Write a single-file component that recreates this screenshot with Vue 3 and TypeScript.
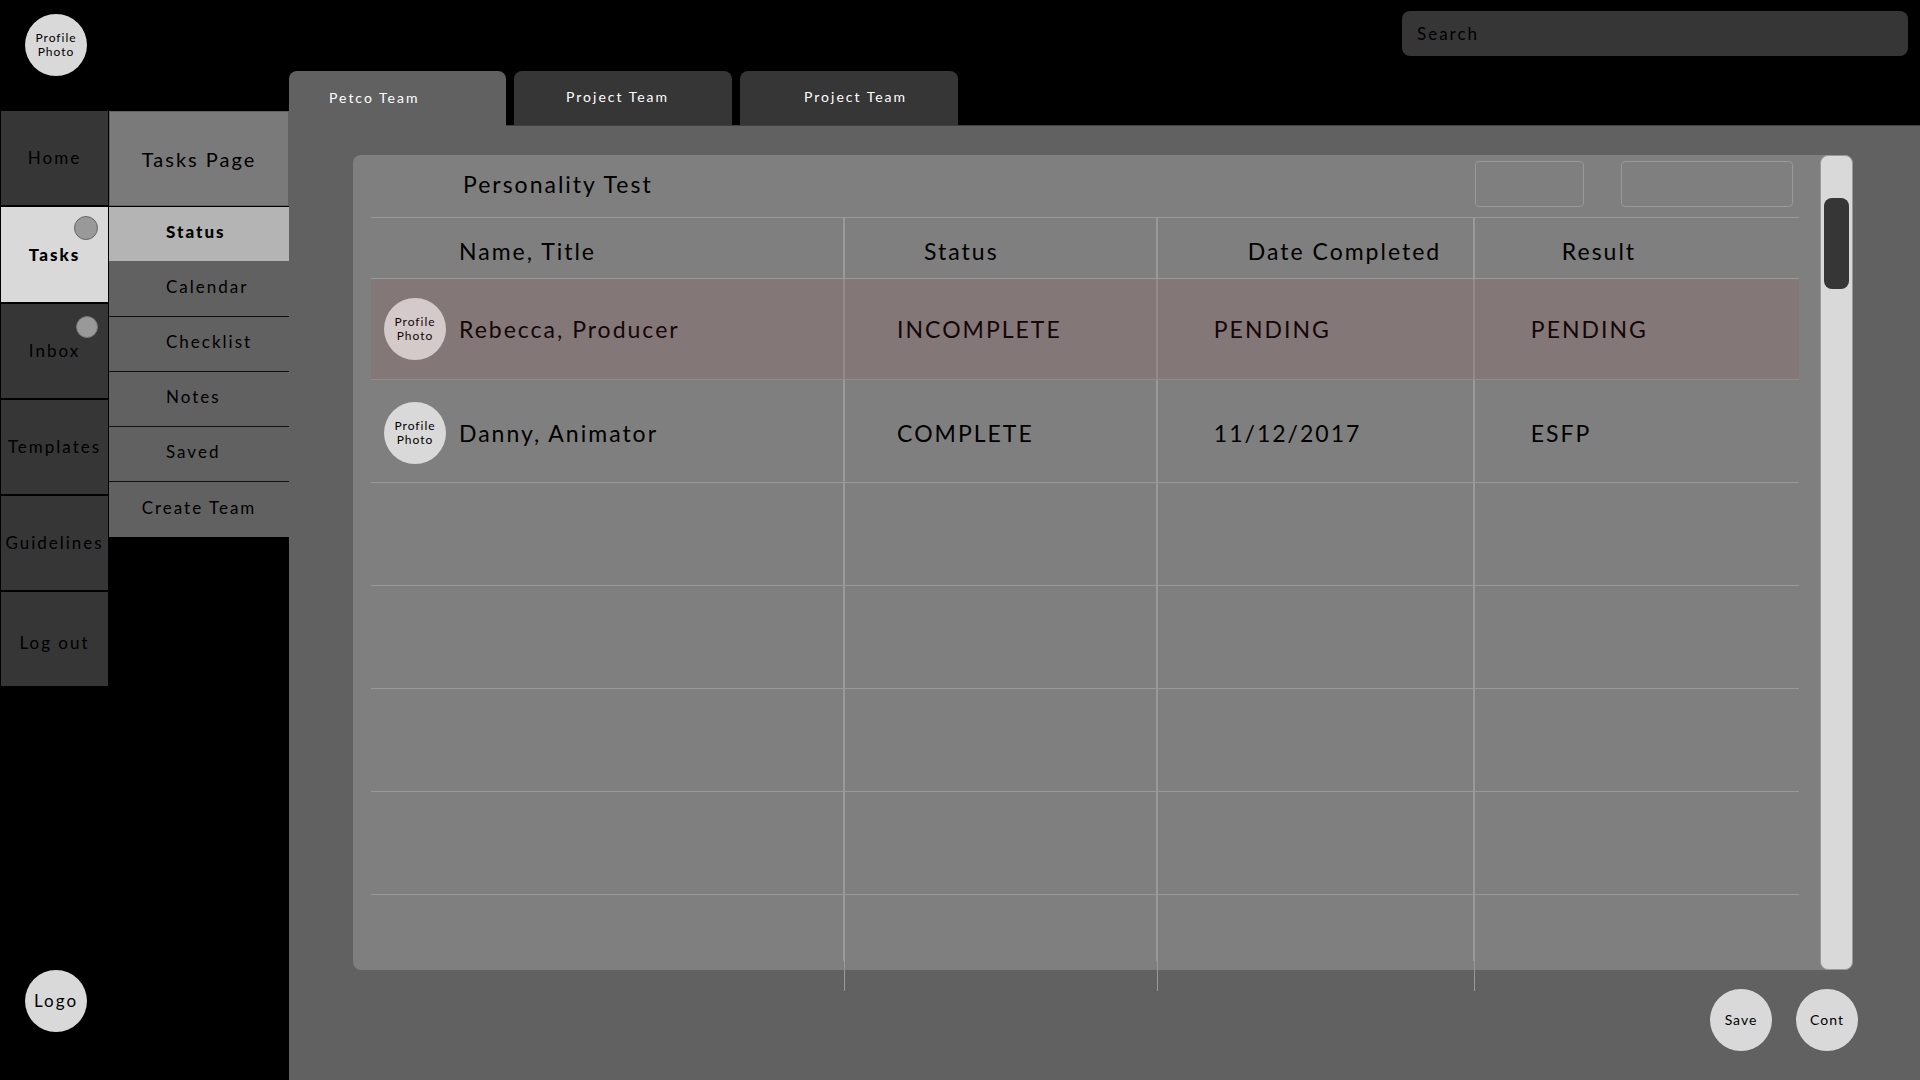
<script setup lang="ts">
import { ref } from 'vue'

interface NavItem {
  label: string
  badge?: 'outlined' | 'soft'
}

interface Person {
  name: string
  status: string
  date: string
  result: string
  pending: boolean
}

const navItems: NavItem[] = [
  { label: 'Home' },
  { label: 'Tasks', badge: 'outlined' },
  { label: 'Inbox', badge: 'soft' },
  { label: 'Templates' },
  { label: 'Guidelines' },
  { label: 'Log out' },
]
const activeNav = ref('Tasks')

const pages: string[] = ['Status', 'Calendar', 'Checklist', 'Notes', 'Saved']
const activePage = ref('Status')

const tabs: string[] = ['Petco Team', 'Project Team', 'Project Team']
const activeTab = ref(0)

// Each tab's label sits one step further in than the one before it
const tabInset = (index: number): string => `${40 + index * 12}px`

const people: Person[] = [
  { name: 'Rebecca, Producer', status: 'INCOMPLETE', date: 'PENDING', result: 'PENDING', pending: true },
  { name: 'Danny, Animator', status: 'COMPLETE', date: '11/12/2017', result: 'ESFP', pending: false },
]
const emptyRows = 5
const query = ref('')
</script>

<template>
  <div class="app">
    <aside class="side">
      <div class="profile">
        <button type="button" class="circle photo">Profile<br />Photo</button>
      </div>
      <div class="menus">
        <nav class="rail" aria-label="Main">
          <a
            v-for="item in navItems"
            :key="item.label"
            href="#"
            class="rail-item"
            :class="{ active: item.label === activeNav }"
            @click.prevent="activeNav = item.label"
          >
            {{ item.label }}
            <span v-if="item.badge" class="badge" :class="item.badge"></span>
          </a>
        </nav>
        <nav class="sub" aria-label="Tasks">
          <h1 class="sub-title">Tasks Page</h1>
          <a
            v-for="page in pages"
            :key="page"
            href="#"
            class="sub-item"
            :class="{ active: page === activePage }"
            @click.prevent="activePage = page"
          >{{ page }}</a>
          <a href="#" class="sub-item create">Create Team</a>
        </nav>
      </div>
      <a href="#" class="circle logo">Logo</a>
    </aside>

    <div class="content">
      <header class="top">
        <input v-model="query" class="search" type="search" placeholder="Search" aria-label="Search" />
      </header>
      <div class="tabs" role="tablist">
        <button
          v-for="(tab, i) in tabs"
          :key="i"
          type="button"
          role="tab"
          class="tab"
          :class="{ active: i === activeTab }"
          :style="{ paddingLeft: tabInset(i) }"
          :aria-selected="i === activeTab"
          @click="activeTab = i"
        >{{ tab }}</button>
      </div>

      <main class="main">
        <section class="panel">
          <div class="sheet">
            <div class="sheet-head">
              <h2 class="title">Personality Test</h2>
              <button type="button" class="box small" aria-label="Filter"></button>
              <button type="button" class="box large" aria-label="Sort"></button>
            </div>
            <table class="table">
              <colgroup>
                <col class="c-name" />
                <col class="c-status" />
                <col class="c-date" />
                <col />
              </colgroup>
              <thead>
                <tr>
                  <th scope="col" class="h-name">Name, Title</th>
                  <th scope="col" class="h-status">Status</th>
                  <th scope="col" class="h-date">Date Completed</th>
                  <th scope="col" class="h-result">Result</th>
                </tr>
              </thead>
              <tbody>
                <tr v-for="person in people" :key="person.name" :class="{ pending: person.pending }">
                  <td class="who">
                    <div class="person">
                      <span class="circle photo">Profile<br />Photo</span>
                      <span>{{ person.name }}</span>
                    </div>
                  </td>
                  <td>{{ person.status }}</td>
                  <td>{{ person.date }}</td>
                  <td>{{ person.result }}</td>
                </tr>
                <tr v-for="n in emptyRows" :key="n" :class="{ last: n === emptyRows }">
                  <td></td>
                  <td></td>
                  <td></td>
                  <td></td>
                </tr>
              </tbody>
            </table>
          </div>
          <div class="track" role="scrollbar" aria-orientation="vertical" aria-valuenow="5" aria-label="Scroll">
            <div class="thumb"></div>
          </div>
        </section>
        <footer class="actions">
          <button type="button" class="circle">Save</button>
          <button type="button" class="circle">Cont</button>
        </footer>
      </main>
    </div>
  </div>
</template>

<style>
body {
  margin: 0;
  background: #000;
}
</style>

<style scoped>
.app,
.app * {
  box-sizing: border-box;
}

.app {
  display: flex;
  min-height: 100vh;
  background: #000;
  color: #000;
  font-family: Lato, 'Noto Sans', sans-serif;
  font-size: 17px;
  line-height: 24px;
  letter-spacing: 2px;
}

a {
  color: inherit;
  text-decoration: none;
}

button,
input {
  font: inherit;
  letter-spacing: inherit;
  color: inherit;
  border: 0;
  padding: 0;
  margin: 0;
}

.circle {
  display: flex;
  flex: none;
  align-items: center;
  justify-content: center;
  width: 62px;
  height: 62px;
  border-radius: 50%;
  background: #d9d9d9;
  text-align: center;
}

.photo {
  font-size: 12px;
  line-height: 14px;
  letter-spacing: 1px;
}

/* Left column */
.side {
  display: flex;
  flex: none;
  flex-direction: column;
  width: 289px;
}

.profile {
  height: 111px;
  padding: 14px 25px;
}

.menus {
  display: flex;
  gap: 1px;
  padding-left: 1px;
}

.rail {
  display: flex;
  flex-direction: column;
  gap: 2px;
  width: 107px;
}

.rail-item {
  position: relative;
  display: flex;
  align-items: center;
  justify-content: center;
  height: 94px;
  background: #363636;
}

.rail-item:last-child {
  padding-top: 8px;
}

.rail-item.active {
  height: 95px;
  background: #d9d9d9;
  font-weight: 900;
}

.badge {
  position: absolute;
  top: 9px;
  right: 10px;
  width: 24px;
  height: 24px;
  border: 1px solid #666;
  border-radius: 50%;
  background: #999;
}

.badge.soft {
  top: 12px;
  width: 22px;
  height: 22px;
  border-color: #777;
}

.sub {
  flex: 1;
}

.sub-title {
  display: flex;
  align-items: center;
  justify-content: center;
  height: 95px;
  margin: 0 0 1px;
  border: 1px solid #616161;
  background: #7a7a7a;
  font-size: 20px;
  font-weight: 400;
}

.sub-item {
  display: flex;
  align-items: center;
  height: 55px;
  padding: 0 0 4px 57px;
  border-bottom: 1px solid #111;
  background: #616161;
}

.sub-item.active {
  border-bottom-color: #616161;
  background: #b4b4b4;
  font-weight: 900;
}

.sub-item.create {
  justify-content: center;
  padding-left: 0;
  border-bottom: 0;
}

.logo {
  margin: auto 0 48px 25px;
}

/* Header */
.content {
  display: flex;
  flex: 1;
  flex-direction: column;
  min-width: 0;
}

.top {
  display: flex;
  justify-content: flex-end;
  height: 71px;
  padding: 11px 12px 0;
}

.search {
  width: 506px;
  height: 45px;
  padding: 0 15px;
  border-radius: 8px;
  background: #363636;
  appearance: none;
  outline: none;
}

.search::placeholder {
  color: #000;
  opacity: 1;
}

.tabs {
  display: flex;
  gap: 8px;
}

.tab {
  width: 218px;
  height: 54px;
  padding-bottom: 2px;
  border-radius: 8px 8px 0 0;
  background: #363636;
  color: #fff;
  font-size: 14px;
  text-align: left;
}

.tab.active {
  width: 217px;
  height: 55px;
  margin-bottom: -1px;
  background: #616161;
  z-index: 1;
}

/* Work area */
.main {
  display: flex;
  flex: 1;
  flex-direction: column;
  padding: 29px 62px 29px 64px;
  border-top: 1px solid #404040;
  background: #616161;
}

.panel {
  display: flex;
  flex: 1;
  gap: 21px;
  margin: 0 5px 19px 0;
  padding-left: 18px;
  border-radius: 8px;
  background: #7f7f7f;
}

.sheet {
  flex: 1;
  min-width: 0;
}

.sheet-head {
  display: flex;
  align-items: center;
  height: 62px;
  padding: 0 6px 4px 92px;
}

.title {
  flex: 1;
  margin: 0;
  font-size: 23px;
  font-weight: 400;
}

.box {
  height: 46px;
  border: 1px solid #999;
  border-radius: 4px;
  background: transparent;
}

.box.small {
  width: 109px;
  margin-right: 37px;
}

.box.large {
  width: 172px;
}

.table {
  width: 100%;
  border-spacing: 0;
  table-layout: fixed;
  font-size: 23px;
}

.c-name {
  width: 33.2%;
}

.c-status {
  width: 21.9%;
}

.c-date {
  width: 22.2%;
}

th,
td {
  padding: 0;
  border-right: 2px solid #999;
  border-bottom: 1px solid #999;
  font-weight: 400;
  text-align: left;
  white-space: nowrap;
}

th:last-child,
td:last-child {
  border-right: 0;
}

th {
  height: 62px;
  padding-top: 6px;
  border-top: 1px solid #999;
}

.h-name {
  padding-left: 88px;
}

.h-status {
  padding-left: 79px;
}

.h-date {
  padding-left: 90px;
}

.h-result {
  padding-left: 87px;
}

td {
  height: 103px;
  padding-top: 4px;
  padding-left: 56px;
}

td:nth-child(2) {
  padding-left: 52px;
}

td.who {
  padding-left: 13px;
}

.person {
  display: flex;
  align-items: center;
  gap: 13px;
}

.pending td {
  height: 101px;
  padding-top: 0;
  border-color: #968989;
  background: #847777;
  color: #140608;
}

.pending .circle {
  background: #d5caca;
}

.last td {
  position: relative;
  height: 75px;
  border: 0;
}

/* Column rules taper to a hairline that runs past the panel's edge */
.last td:not(:last-child)::before,
.last td:not(:last-child)::after {
  content: '';
  position: absolute;
  top: 0;
  right: 0;
  background: #999;
}

.last td:not(:last-child)::before {
  bottom: 9px;
  width: 2px;
}

.last td:not(:last-child)::after {
  bottom: -21px;
  width: 1px;
}

.track {
  flex: none;
  width: 33px;
  padding: 42px 3px;
  border: 1px solid #999;
  border-radius: 8px;
  background: #d9d9d9;
}

.thumb {
  height: 91px;
  border-radius: 8px;
  background: #363636;
}

.actions {
  display: flex;
  justify-content: flex-end;
  gap: 24px;
}

.actions .circle {
  font-size: 14px;
  letter-spacing: 1px;
}
</style>
